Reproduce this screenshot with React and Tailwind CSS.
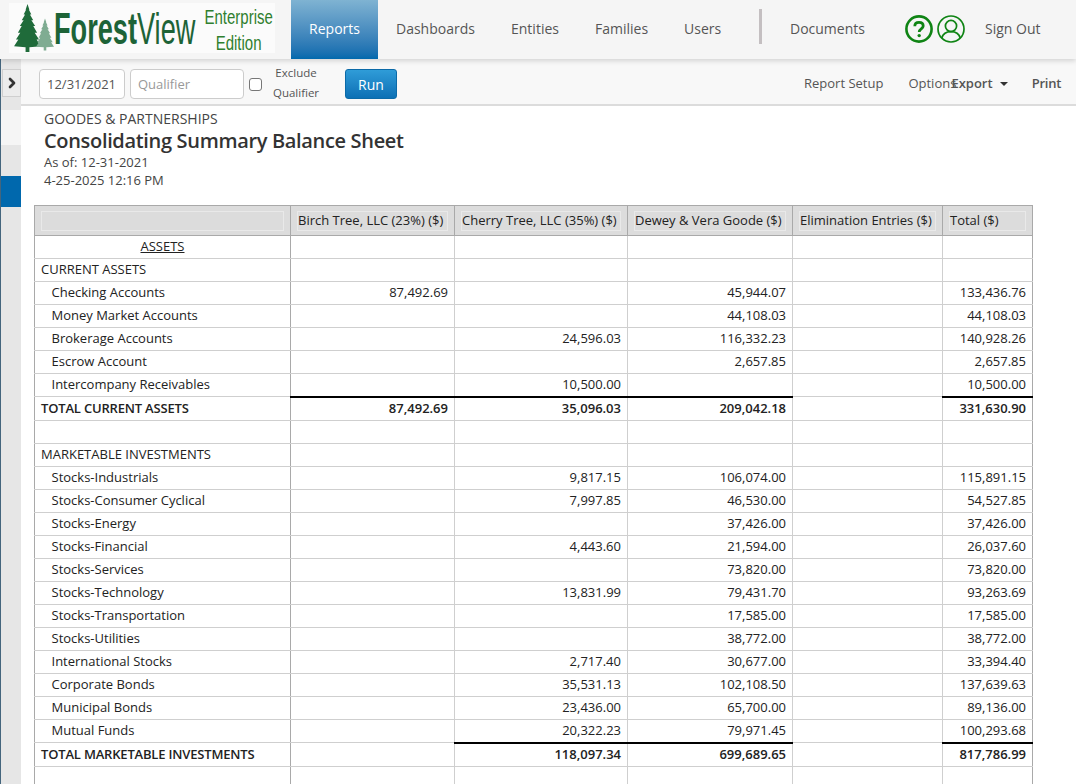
import { ChevronRight } from 'lucide-react';

const NAV = ['Dashboards', 'Entities', 'Families', 'Users'];
const NAV_WIDTHS = ['w-[115px]', 'w-[84px]', 'w-[89px]', 'w-[93px]'];

const COLUMNS = [
  { label: 'Birch Tree, LLC (23%) ($)' },
  { label: 'Cherry Tree, LLC (35%) ($)' },
  { label: 'Dewey & Vera Goode ($)' },
  { label: 'Elimination Entries ($)' },
  { label: 'Total ($)' },
];

// type: heading | section | item | total | blank
const ROWS = [
  { type: 'heading', label: 'ASSETS' },
  { type: 'section', label: 'CURRENT ASSETS' },
  { type: 'item', label: 'Checking Accounts', values: ['87,492.69', '', '45,944.07', '', '133,436.76'] },
  { type: 'item', label: 'Money Market Accounts', values: ['', '', '44,108.03', '', '44,108.03'] },
  { type: 'item', label: 'Brokerage Accounts', values: ['', '24,596.03', '116,332.23', '', '140,928.26'] },
  { type: 'item', label: 'Escrow Account', values: ['', '', '2,657.85', '', '2,657.85'] },
  { type: 'item', label: 'Intercompany Receivables', values: ['', '10,500.00', '', '', '10,500.00'] },
  { type: 'total', label: 'TOTAL CURRENT ASSETS', values: ['87,492.69', '35,096.03', '209,042.18', '', '331,630.90'] },
  { type: 'blank' },
  { type: 'section', label: 'MARKETABLE INVESTMENTS' },
  { type: 'item', label: 'Stocks-Industrials', values: ['', '9,817.15', '106,074.00', '', '115,891.15'] },
  { type: 'item', label: 'Stocks-Consumer Cyclical', values: ['', '7,997.85', '46,530.00', '', '54,527.85'] },
  { type: 'item', label: 'Stocks-Energy', values: ['', '', '37,426.00', '', '37,426.00'] },
  { type: 'item', label: 'Stocks-Financial', values: ['', '4,443.60', '21,594.00', '', '26,037.60'] },
  { type: 'item', label: 'Stocks-Services', values: ['', '', '73,820.00', '', '73,820.00'] },
  { type: 'item', label: 'Stocks-Technology', values: ['', '13,831.99', '79,431.70', '', '93,263.69'] },
  { type: 'item', label: 'Stocks-Transportation', values: ['', '', '17,585.00', '', '17,585.00'] },
  { type: 'item', label: 'Stocks-Utilities', values: ['', '', '38,772.00', '', '38,772.00'] },
  { type: 'item', label: 'International Stocks', values: ['', '2,717.40', '30,677.00', '', '33,394.40'] },
  { type: 'item', label: 'Corporate Bonds', values: ['', '35,531.13', '102,108.50', '', '137,639.63'] },
  { type: 'item', label: 'Municipal Bonds', values: ['', '23,436.00', '65,700.00', '', '89,136.00'] },
  { type: 'item', label: 'Mutual Funds', values: ['', '20,322.23', '79,971.45', '', '100,293.68'] },
  { type: 'total', label: 'TOTAL MARKETABLE INVESTMENTS', values: ['', '118,097.34', '699,689.65', '', '817,786.99'] },
  { type: 'blank' },
];

function Pine({ className, color }) {
  return (
    <svg viewBox="0 0 28 50" className={className} fill={color}>
      <path d="M14 0 L16 6 L15.5 6 L18 11 L16.5 11 L20 17 L18 17 L22 23 L20 23 L24 30 L21.5 30 L26 37 L23.5 37 L28 44 L16 45 L16 50 L12 50 L12 45 L0 44 L4.5 37 L2 37 L6.5 30 L4 30 L8 23 L6 23 L10 17 L8 17 L11.5 11 L10 11 L12.5 6 L12 6 Z" />
    </svg>
  );
}

function Logo() {
  return (
    <div className="w-[291px] h-full shrink-0 pl-[9px] pt-[3px]">
      <div className="flex w-[266px] h-[50px] bg-[#fbfbfb] pl-[5px]">
        <Pine className="w-[27px] h-[48px] shrink-0 mt-[1px]" color="#1f6b3a" />
        <Pine className="w-[18px] h-[35px] shrink-0 mt-[14px] -ml-[5px]" color="#7fac92" />
        <div className="w-[149px] shrink-0">
          <div className="text-[44px] leading-[50px] text-[#1d6337] origin-left scale-x-[0.617] whitespace-nowrap font-['Liberation_Sans',sans-serif] pt-[1px]">
            <span className="font-bold">Forest</span>
            <span>View</span>
          </div>
        </div>
        <div className="w-[72px] shrink-0">
          <div className="w-[95px] origin-top-left scale-x-[0.75] text-center text-[#2f7f2f] text-[20px] leading-[26px] font-['Liberation_Sans',sans-serif] pt-[1px]">
            <div>Enterprise</div>
            <div>Edition</div>
          </div>
        </div>
      </div>
    </div>
  );
}

function HelpIcon() {
  return (
    <svg viewBox="0 0 28 28" className="w-[28px] h-[28px] shrink-0" fill="none" stroke="#0f8414">
      <circle cx="14" cy="14" r="12.6" strokeWidth="2.6" />
      <path d="M9.8 11.2 C9.8 8.6 11.8 7.4 14 7.4 C16.4 7.4 18.2 8.8 18.2 11 C18.2 13.8 14.2 14 14.2 17" strokeWidth="2.8" />
      <circle cx="14.2" cy="20.6" r="1.7" fill="#0f8414" stroke="none" />
    </svg>
  );
}

function UserIcon() {
  return (
    <svg viewBox="0 0 28 28" className="w-[28px] h-[28px] ml-[4px] shrink-0" fill="none" stroke="#0f8414" strokeWidth="1.7">
      <circle cx="14" cy="14" r="13" />
      <circle cx="14" cy="11" r="5.6" />
      <path d="M4.8 23 C6 18.6 9.5 16.6 14 16.6 C18.5 16.6 22 18.6 23.2 23" />
    </svg>
  );
}

function TopNav() {
  return (
    <header className="flex h-[59px] bg-[#f5f5f5] shadow-[0_2px_5px_rgba(0,0,0,0.15)] relative text-[14px] text-[#555]">
      <Logo />
      <a className="flex items-center justify-center w-[87px] pb-[2px] shrink-0 text-white bg-gradient-to-b from-[#7fb3d2] to-[#0069ad]">Reports</a>
      <nav className="flex items-center pb-[2px]">
        {NAV.map((item, i) => (
          <a key={item} className={`pl-[18px] ${NAV_WIDTHS[i]}`}>{item}</a>
        ))}
      </nav>
      <div className="w-[3px] h-[35px] mt-[9px] bg-[#c4bfc1] shrink-0" />
      <div className="flex items-center pl-[28px] pb-[2px]">
        <a className="w-[115px]">Documents</a>
        <HelpIcon />
        <UserIcon />
        <a className="ml-[20px]">Sign Out</a>
      </div>
    </header>
  );
}

function Toolbar() {
  return (
    <div className="flex items-center h-[47px] bg-[#f8f8f8] border-b-2 border-[#dcdcdc] text-[12px] text-[#555] pt-[5px]">
      <input readOnly value="12/31/2021" className="w-[86px] h-[30px] px-[7px] ml-[18px] bg-white border border-[#ccc] rounded text-[13px] text-[#555]" />
      <input readOnly placeholder="Qualifier" className="w-[114px] h-[30px] px-[7px] ml-[5px] bg-white border border-[#ccc] rounded text-[13px] placeholder:text-[#999]" />
      <span className="w-[13px] h-[13px] ml-[5px] border border-[#777] rounded-[3px] bg-white shrink-0" />
      <div className="w-[48px] ml-[10px] -mt-[2px] text-center leading-[20px] text-[11.5px]">
        <div>Exclude</div>
        <div>Qualifier</div>
      </div>
      <button className="w-[52px] h-[30px] ml-[25px] rounded-[3px] border border-[#0b6aa8] text-white text-[14px] bg-gradient-to-b from-[#2f9cd8] to-[#0b70b5]">Run</button>
      <a className="ml-[407px] text-[13px]">Report Setup</a>
      <a className="ml-[25px] w-[43px] text-[13px] whitespace-nowrap">Options</a>
      <a className="font-semibold text-[13px] flex items-center">
        Export
        <span className="ml-[7px] border-x-[4px] border-x-transparent border-t-[4px] border-t-[#333]" />
      </a>
      <a className="ml-[24px] font-semibold text-[13px] tracking-[-0.2px]">Print</a>
    </div>
  );
}

function Sidebar() {
  return (
    <aside className="w-[21px] shrink-0 flex flex-col border-l border-[#44657d] bg-[#e6e6e6]">
      <div className="h-[10px]" />
      <div className="flex items-center justify-center h-[28px] ml-[1px] border border-[#cfcfcf] bg-[#ececec]">
        <ChevronRight className="w-[16px] h-[16px] text-[#333]" strokeWidth={4} />
      </div>
      <div className="h-[13px]" />
      <div className="h-[35px] bg-[#f5f5f5]" />
      <div className="h-[31px]" />
      <div className="h-[31px] bg-[#0068ad]" />
      <div className="flex-1" />
    </aside>
  );
}

function HeaderCell({ label }) {
  return (
    <th className="h-[30px] border border-[#a9a9a9] bg-[#dcdcdc] font-normal text-left px-[6px]">
      <div className="h-[20px] border border-[#e9e9e9] whitespace-nowrap leading-[16px]">{label}</div>
    </th>
  );
}

function ReportRow({ row }) {
  const isTotal = row.type === 'total';
  const values = row.values || ['', '', '', '', ''];
  const labelClass = {
    heading: 'text-center',
    section: 'pl-[6px]',
    item: 'pl-[16.5px]',
    total: 'pl-[6px] font-semibold tracking-[-0.18px]',
    blank: '',
  }[row.type];

  return (
    <tr className={isTotal ? 'h-[24px]' : 'h-[23px]'}>
      <td className={`border-x border-x-[#a9a9a9] border-y border-y-[#cfcfcf] whitespace-nowrap pb-[2px] ${labelClass}`}>
        {row.type === 'heading' ? <span className="underline">{row.label}</span> : row.label}
      </td>
      {values.map((v, i) => (
        <td
          key={i}
          className={`border-y border-[#cfcfcf] border-x px-[6px] pb-[2px] text-right ${isTotal ? 'font-semibold' : ''} ${isTotal && v ? 'border-t-2 border-t-black' : ''} ${i === 4 ? 'border-r-[#a9a9a9]' : ''}`}
        >
          {v}
        </td>
      ))}
    </tr>
  );
}

function ReportTable() {
  return (
    <table className="table-fixed border-collapse w-[999px] text-[13px] text-[#222] leading-[18px]">
      <colgroup>
        <col className="w-[256px]" />
        <col className="w-[164px]" />
        <col className="w-[173px]" />
        <col className="w-[165px]" />
        <col className="w-[150px]" />
        <col className="w-[90px]" />
      </colgroup>
      <thead>
        <tr>
          <HeaderCell label="" />
          {COLUMNS.map((c) => <HeaderCell key={c.label} label={c.label} />)}
        </tr>
      </thead>
      <tbody>
        {ROWS.map((row, i) => <ReportRow key={i} row={row} />)}
      </tbody>
    </table>
  );
}

export default function App() {
  return (
    <div className="h-[784px] w-[1076px] overflow-hidden bg-white font-['Open_Sans',sans-serif]">
      <TopNav />
      <div className="flex h-[725px]">
        <Sidebar />
        <main className="flex-1 min-w-0">
          <Toolbar />
          <div className="pl-[23px] pt-[3px] text-[#444]">
            <div className="text-[14px] leading-[19px]">GOODES &amp; PARTNERSHIPS</div>
            <h1 className="text-[20px] leading-[26px] font-semibold tracking-[-0.33px] text-[#333]">Consolidating Summary Balance Sheet</h1>
            <div className="text-[13px] leading-[18px] -mt-[1px]">As of: 12-31-2021</div>
            <div className="text-[13px] leading-[18px]">4-25-2025 12:16 PM</div>
          </div>
          <div className="pl-[13px] pt-[16px]">
            <ReportTable />
          </div>
        </main>
      </div>
    </div>
  );
}
